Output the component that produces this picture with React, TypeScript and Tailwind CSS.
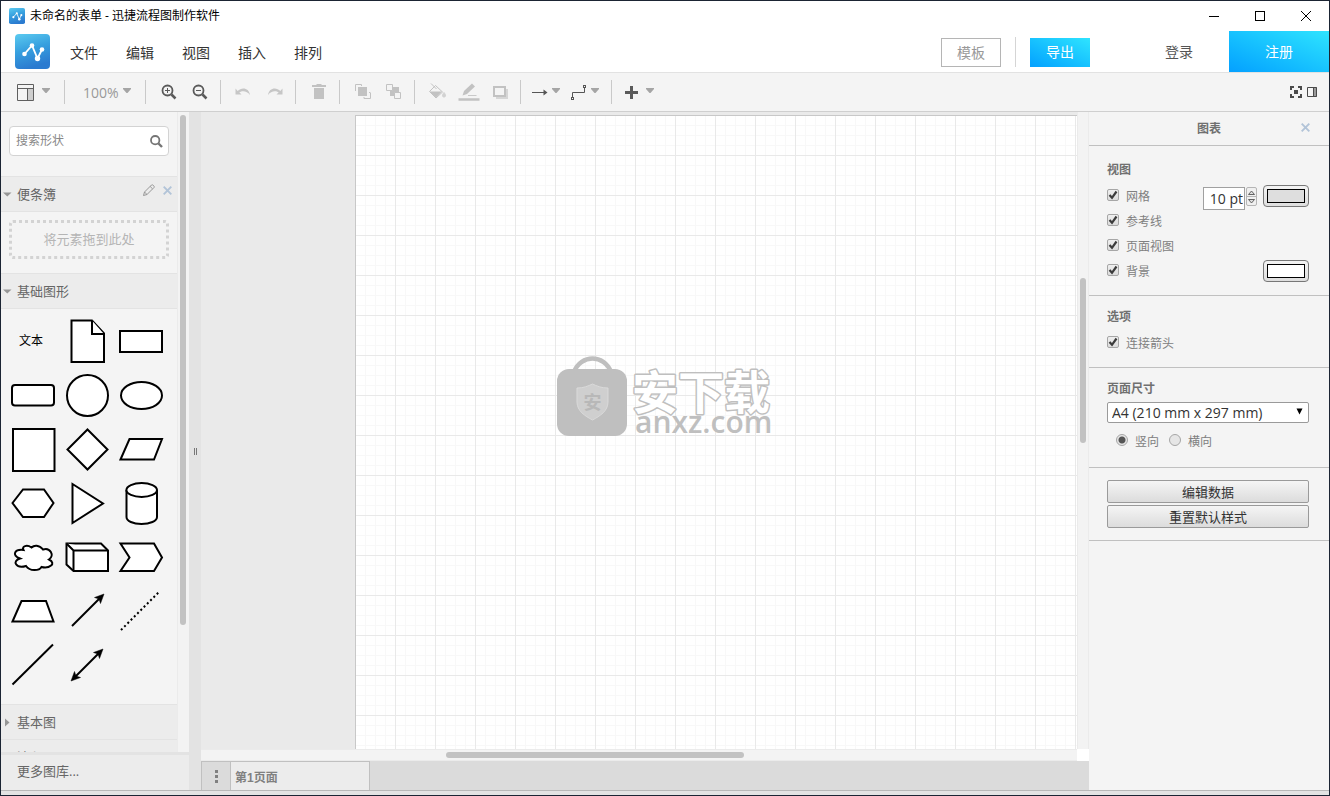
import React from 'react';

const menus = ['文件', '编辑', '视图', '插入', '排列'];

const shapes: { name: string; body: React.ReactNode }[] = [
  {
    name: '文档',
    body: (
      <>
        <path d="M11.5 6.5H32L44 19.5V48H11.5Z" />
        <path d="M32 6.5V20H44" />
      </>
    ),
  },
  { name: '矩形', body: <rect x="6" y="17" width="42" height="21" /> },
  { name: '圆角矩形', body: <rect x="6" y="17" width="42" height="20.5" rx="3" /> },
  { name: '圆', body: <circle cx="27.5" cy="27.5" r="20.5" /> },
  { name: '椭圆', body: <ellipse cx="27.5" cy="27.5" rx="20.5" ry="13.5" /> },
  { name: '正方形', body: <rect x="7" y="7" width="41.5" height="42" /> },
  { name: '菱形', body: <path d="M27.5 7.5L47.5 27.5L27.5 47.5L7.5 27.5Z" /> },
  { name: '平行四边形', body: <path d="M6.5 37.5L15.5 17H48L40 37.5Z" /> },
  { name: '六边形', body: <path d="M6.5 27L17 13.5H38L47.5 27L38 41H17Z" /> },
  { name: '三角形', body: <path d="M12.5 8L43 27.5L12.5 47Z" /> },
  {
    name: '圆柱',
    body: (
      <>
        <path d="M12.5 14V41C12.5 45 19 48 27.5 48S43 45 43 41V14" />
        <ellipse cx="27.7" cy="14" rx="15.3" ry="7" />
      </>
    ),
  },
  {
    name: '云',
    body: (
      <path d="M17.5 20C9 19 5 25 14 28.5C5.5 31 10 39 20 36C24 41.500 33 41 35.500 37C43 39 51 33.500 43 29.500C49 25.500 44 17 37 19.500C33 14.500 28 15 25.500 17.500C21 14.500 15.500 16 17.500 20Z" />
    ),
  },
  {
    name: '立方体',
    body: (
      <>
        <path d="M6.5 13.5H41L48 20.5V41H13.5L6.5 34.5Z" />
        <path d="M6.5 13.5L13.5 20.5H48M13.5 20.5V41" />
      </>
    ),
  },
  { name: '步骤', body: <path d="M6.5 13.5H40L48 27.5L40 41H6.5L15.5 27.5Z" /> },
  { name: '梯形', body: <path d="M6.5 37.5L15.5 17H40L47.5 37.5Z" /> },
  {
    name: '箭头',
    body: (
      <>
        <path d="M12 42L40 14" />
        <path d="M44 10L40.5 19.5L39 15L34.5 13.5Z" fill="#000" strokeWidth="0.5" />
      </>
    ),
  },
  { name: '虚线', body: <path d="M7 46L46 7" strokeDasharray="2 2.6" /> },
  { name: '直线', body: <path d="M6.5 46.5L47 6.5" /> },
  {
    name: '双向箭头',
    body: (
      <>
        <path d="M15 39L39 15" />
        <path d="M43 11L39.5 20.5L38 16L33.5 14.5Z" fill="#000" strokeWidth="0.5" />
        <path d="M11 43L14.5 33.5L16 38L20.5 39.5Z" fill="#000" strokeWidth="0.5" />
      </>
    ),
  },
];

const Logo: React.FC<{ className: string }> = ({ className }) => (
  <svg className={className} viewBox="0 0 35 35" aria-hidden="true">
    <defs>
      <linearGradient id="logo" x1="0" y1="0" x2="0.3" y2="1">
        <stop offset="0" stopColor="#5ccbf0" />
        <stop offset="0.5" stopColor="#37a0df" />
        <stop offset="1" stopColor="#2b7bd0" />
      </linearGradient>
    </defs>
    <rect width="35" height="35" rx="4" fill="url(#logo)" />
    <path d="M9.5 20L17 11.5L22.5 24.5L27 15.5" fill="none" stroke="#fff" strokeWidth="1.8" />
    <circle cx="9.5" cy="20" r="2.3" fill="#fff" />
    <circle cx="17" cy="11.5" r="2.3" fill="#fff" />
    <circle cx="22.5" cy="24.5" r="2.7" fill="#fff" />
    <circle cx="27" cy="15.5" r="2.3" fill="#fff" />
  </svg>
);

const Caret: React.FC = () => (
  <svg className="mb-1 h-[5px] w-2 shrink-0" viewBox="0 0 8 5" aria-hidden="true">
    <path d="M0 0H8V1L4.5 5H3.5L0 1Z" fill="#a5a5a5" />
  </svg>
);

const Group: React.FC<{ children: React.ReactNode }> = ({ children }) => (
  <div className="flex h-6 items-center border-r border-[#c9c9c9] pr-1 pl-2">{children}</div>
);

const Tool: React.FC<{ label: string; children: React.ReactNode }> = ({ label, children }) => (
  <button aria-label={label} className="flex h-6 w-[31px] items-center justify-center">
    <svg className="h-[22px] w-[22px]" viewBox="0 0 22 22" fill="none" aria-hidden="true">
      {children}
    </svg>
  </button>
);

const Toolbar: React.FC = () => (
  <div className="flex h-[39px] shrink-0 items-center border-b border-[#cfcfcf] bg-[#f4f4f4]">
    <div className="flex h-6 items-center border-r border-[#c9c9c9] pr-[14px] pl-4">
      <button aria-label="布局" className="flex items-center gap-2">
        <svg className="h-[17px] w-[17px]" viewBox="0 0 17 17" fill="none" aria-hidden="true">
          <rect x="11" y="5" width="5" height="11" fill="#cfcfcf" />
          <path d="M0.5 0.5H16.5V16.5H0.5ZM0.5 4.5H16.5M10.5 4.5V16.5" stroke="#5f5f5f" />
        </svg>
        <Caret />
      </button>
    </div>
    <div className="flex h-6 items-center border-r border-[#c9c9c9] pr-[14px] pl-[18px]">
      <button className="flex items-center gap-1 text-sm text-[#999]">
        <span className="pt-[2px]">100%</span>
        <Caret />
      </button>
    </div>
    <Group>
      <Tool label="放大">
        <circle cx="9.5" cy="9.5" r="5" stroke="#5a5a5a" strokeWidth="1.8" />
        <path d="M13.5 13.5L17.5 17.5" stroke="#5a5a5a" strokeWidth="2.5" />
        <path d="M7 9.5H12M9.5 7V12" stroke="#5a5a5a" />
      </Tool>
      <Tool label="缩小">
        <circle cx="9.5" cy="9.5" r="5" stroke="#5a5a5a" strokeWidth="1.8" />
        <path d="M13.5 13.5L17.5 17.5" stroke="#5a5a5a" strokeWidth="2.5" />
        <path d="M7 9.5H12" stroke="#5a5a5a" />
      </Tool>
    </Group>
    <Group>
      <Tool label="撤销">
        <path d="M2.5 7.500V13.500H8.500L6.300 11.300C9 9.500 14 9.500 17 14C16 6.500 8.500 5.800 4.700 10Z" fill="#c6c6c6" />
      </Tool>
      <Tool label="重做">
        <path d="M18.500 7.500V13.500H12.500L14.700 11.300C12 9.500 7 9.500 4 14C5 6.500 12.500 5.800 16.300 10Z" fill="#c6c6c6" />
      </Tool>
    </Group>
    <Group>
      <Tool label="删除">
        <path d="M4 4H8.5V3H13.5V4H18V6H4ZM6 7H16V18H6Z" fill="#c2c2c2" />
      </Tool>
    </Group>
    <Group>
      <Tool label="移至最前">
        <path d="M3.5 10V3.5H9.5V5M18.5 12V17.5H12V16M17 11.5H18.5" stroke="#c2c2c2" />
        <rect x="6" y="6" width="9" height="9" fill="#c2c2c2" />
      </Tool>
      <Tool label="移至最后">
        <rect x="7" y="6" width="9" height="9" fill="#c2c2c2" />
        <path d="M3.5 3.5H9.5V9.5H3.5ZM11.5 11.5H17.500V17.500H11.500Z" fill="#f4f4f4" stroke="#c2c2c2" />
      </Tool>
    </Group>
    <Group>
      <Tool label="填充颜色">
        <path d="M2.5 10.5H15L9 16.5Z" fill="#c2c2c2" />
        <path d="M2.5 10.5L8.5 4.5L15.5 11L9 17ZM4 2.5L9.500 8" stroke="#c2c2c2" />
        <path d="M17 11.5C19 14 19 16 17 16S15 14 17 11.5Z" fill="#d2d2d2" stroke="#d2d2d2" />
      </Tool>
      <Tool label="线条颜色">
        <path d="M4.5 14.5L6 10L14 2.5L17 5.5L9 13Z" fill="#c2c2c2" />
        <path d="M0.5 18.5H21.5" stroke="#c2c2c2" strokeWidth="2.5" />
        <path d="M10 14.5H18.5" stroke="#c9c9c9" />
      </Tool>
      <Tool label="阴影">
        <rect x="7" y="8" width="12" height="10" fill="#d6d6d6" />
        <rect x="5" y="6" width="11" height="9" fill="#f4f4f4" stroke="#c2c2c2" strokeWidth="2" />
      </Tool>
    </Group>
    <Group>
      <button aria-label="连接" className="flex w-[39px] items-center gap-1 pl-[3px]">
        <svg className="h-4 w-4" viewBox="0 0 16 16" aria-hidden="true">
          <path d="M0 8.5H13" stroke="#555" fill="none" />
          <path d="M11.5 5.5L15.5 8.5L11.5 11.5Z" fill="#555" />
        </svg>
        <Caret />
      </button>
      <button aria-label="航点" className="flex w-[39px] items-center gap-1 pl-[3px]">
        <svg className="h-4 w-4" viewBox="0 0 16 16" fill="none" stroke="#555" aria-hidden="true">
          <path d="M1.5 13V8.5H13.5V4" />
          <rect x="0.5" y="13.5" width="2" height="2" />
          <rect x="12.5" y="1.5" width="2" height="2" />
        </svg>
        <Caret />
      </button>
    </Group>
    <button aria-label="插入" className="flex items-center gap-2 pl-[13px]">
      <svg className="h-[13px] w-[13px]" viewBox="0 0 13 13" aria-hidden="true">
        <path d="M5 0H8V5H13V8H8V13H5V8H0V5H5Z" fill="#5a5a5a" />
      </svg>
      <Caret />
    </button>
    <div className="ml-auto flex items-center gap-[5px] pr-3 pb-px">
      <button aria-label="全屏">
        <svg className="h-3 w-3" viewBox="0 0 12 12" fill="none" aria-hidden="true">
          <path d="M1 4V1H4M8 1H11V4M11 8V11H8M4 11H1V8" stroke="#4a4a4a" strokeWidth="2" />
          <rect x="4" y="4" width="4" height="4" fill="#4a4a4a" />
        </svg>
      </button>
      <button aria-label="格式面板">
        <svg className="h-[10px] w-[10px]" viewBox="0 0 10 10" fill="none" aria-hidden="true">
          <rect x="6" y="0" width="4" height="10" fill="#999" />
          <path d="M0.5 0.5H9.5V9.5H0.5ZM6.5 0.5V9.5" stroke="#4a4a4a" />
        </svg>
      </button>
    </div>
  </div>
);

const SectionHeader: React.FC<{ title: string; open?: boolean; children?: React.ReactNode }> = ({ title, open, children }) => (
  <div className="-mb-px flex h-9 shrink-0 items-center border-y border-[#e3e3e3] bg-[#ececec]">
    <button aria-expanded={!!open} className="flex items-center gap-[5px] pl-[2px] text-[13px] leading-5 text-[#666]">
      <svg className="h-[9px] w-[9px]" viewBox="0 0 9 9" aria-hidden="true">
        <path d={open ? 'M0 2.5H8.5L4.3 6.5Z' : 'M2 0.5L6.5 4.5L2 8.5Z'} fill="#969696" />
      </svg>
      {title}
    </button>
    {children}
  </div>
);

const Sidebar: React.FC = () => (
  <aside className="flex w-[188px] shrink-0 flex-col bg-[#f4f4f4]">
    <div className="flex min-h-0 flex-1">
      <div className="flex w-44 flex-col overflow-hidden">
        <div className="mx-2 mt-[14px] mb-5 flex h-[30px] shrink-0 items-center rounded-sm border border-[#d3d3d3] bg-white pr-[5px] pl-[6px]">
          <input
            aria-label="搜索形状"
            placeholder="搜索形状"
            className="min-w-0 flex-1 text-xs text-[#555] outline-none placeholder:text-[#888]"
          />
          <button aria-label="搜索">
            <svg className="h-[13px] w-[13px]" viewBox="0 0 13 13" fill="none" stroke="#757575" aria-hidden="true">
              <circle cx="5.2" cy="5.2" r="4.2" strokeWidth="1.8" />
              <path d="M8.5 8.5L12 12" strokeWidth="2.4" />
            </svg>
          </button>
        </div>
        <SectionHeader title="便条簿" open>
          <div className="mb-2 ml-auto flex items-center gap-2 pr-[5px]">
            <button aria-label="编辑便条簿">
              <svg className="h-3 w-3" viewBox="0 0 12 12" fill="none" stroke="#8d8d8d" aria-hidden="true">
                <path d="M0.5 11.5L1.5 8L8.5 1C9.5 0 12 2.5 11 3.5L4 10.5ZM1.5 8L4 10.5M7.2 2.5L9.5 4.8" strokeWidth="0.9" />
              </svg>
            </button>
            <button aria-label="关闭便条簿">
              <svg className="h-[9px] w-[9px]" viewBox="0 0 9 9" aria-hidden="true">
                <path d="M0.7 0.7L8.3 8.3M8.3 0.7L0.7 8.3" stroke="#b2c4d8" strokeWidth="1.9" />
              </svg>
            </button>
          </div>
        </SectionHeader>
        <div className="mx-2 mt-[9px] mb-[14px] flex h-[39px] shrink-0 items-center justify-center rounded border-[3px] border-dotted border-[#d3d3d3] text-[13px] text-[#b5b5b5]">
          将元素拖到此处
        </div>
        <SectionHeader title="基础图形" open />
        <div className="grid shrink-0 grid-cols-[repeat(3,54px)] pt-[6px] pb-3 pl-[5px]">
          <button className="h-[54px] pr-1 text-xs text-black">文本</button>
          {shapes.map((s) => (
            <button key={s.name} aria-label={s.name} className="h-[54px]">
              <svg className="h-[54px] w-[54px]" viewBox="0 0 54 54" fill="#fff" stroke="#000" strokeWidth="2" aria-hidden="true">
                {s.body}
              </svg>
            </button>
          ))}
        </div>
        <SectionHeader title="基本图" />
        <SectionHeader title="流程图" />
      </div>
      <div className="flex-1 border-l border-[#ebebeb] bg-[#f3f3f3] px-[2px] pt-[3px]">
        <div className="h-4/5 w-[6px] rounded-full bg-[#c2c2c2]" />
      </div>
    </div>
    <a href="#more" className="flex h-[38px] shrink-0 items-center border-t-[3px] border-[#e3e3e3] bg-[#ececec] pb-px pl-4 text-[13px] text-[#666]">
      更多图库...
    </a>
  </aside>
);

const Watermark: React.FC = () => (
  <svg className="pointer-events-none absolute top-[239px] left-[200px] h-[84px] w-[224px]" viewBox="0 0 224 84">
    <path d="M18 17C25 -1 48 -1 55 17" fill="none" stroke="#bfbfbf" strokeWidth="4.5" />
    <rect x="1" y="14" width="70" height="67" rx="12" fill="#bfbfbf" />
    <path d="M21 33C28 33 32 31 36.500 29C41 31 45 33 52 33V47C52 56 44 61 36.500 65C29 61 21 56 21 47Z" fill="#cfcfcf" stroke="#dadada" />
    <g fontFamily="'Noto Sans CJK SC', sans-serif" fontWeight="700">
      <text x="36.5" y="54" fontSize="18" textAnchor="middle" fill="#b8b8b8">安</text>
      <text x="76" y="54" fontSize="46" fill="#fff" stroke="#bfbfbf" strokeWidth="3" strokeLinejoin="round" paintOrder="stroke">
        安下载
      </text>
    </g>
    <text x="79" y="78" fontFamily="'Open Sans', sans-serif" fontSize="30" fontWeight="600" fill="#bfbfbf">anxz.com</text>
  </svg>
);

const Canvas: React.FC = () => (
  <main className="flex min-w-0 flex-1 flex-col">
    <div className="flex min-h-0 flex-1">
      <div className="flex min-w-0 flex-1 overflow-hidden bg-[#eaeaea] pt-[3px] pl-[154px]">
        <div className="relative flex-1 border-t border-l border-[#c8c8c8] bg-white bg-[linear-gradient(to_right,#e9e9e9_1px,transparent_1px),linear-gradient(to_bottom,#e9e9e9_1px,transparent_1px),linear-gradient(to_right,#f8f8f8_1px,transparent_1px),linear-gradient(to_bottom,#f8f8f8_1px,transparent_1px)] bg-[size:40px_40px,40px_40px,10px_10px,10px_10px] bg-[position:-1px_-1px]">
          <Watermark />
        </div>
      </div>
      <div className="flex w-3 flex-col border-x border-[#ebebeb] bg-[#f3f3f3] px-[2px]">
        <div className="basis-[26%]" />
        <div className="h-[26%] w-[6px] rounded-full bg-[#c2c2c2]" />
      </div>
    </div>
    <div className="flex h-3 shrink-0">
      <div className="flex flex-1 items-center border-y border-[#ebebeb] bg-[#f3f3f3]">
        <div className="basis-[28%]" />
        <div className="h-[6px] w-[34%] rounded-full bg-[#c2c2c2]" />
      </div>
      <div className="w-3 bg-white" />
    </div>
    <div className="flex h-[29px] shrink-0 bg-[#dbdbdb]">
      <button aria-label="页面列表" className="flex w-[29px] items-center justify-center border-t border-l border-[#c0c0c0]">
        <svg className="h-[13px] w-[3px]" viewBox="0 0 3 13" aria-hidden="true">
          <path d="M0 0H3V3H0ZM0 5H3V8H0ZM0 10H3V13H0Z" fill="#808080" />
        </svg>
      </button>
      <button className="w-[140px] border-x border-t border-[#c0c0c0] bg-[#ececec] pt-1 pl-1 text-left font-[Liberation_Sans,Noto_Sans_CJK_SC,sans-serif] text-xs font-bold text-[#808080]">
        第1页面
      </button>
    </div>
  </main>
);

const Check: React.FC<{ label: string }> = ({ label }) => (
  <label className="flex h-[25px] items-center gap-[7px] text-xs text-[#808080]">
    <span className="relative mb-[3px] flex h-3 w-3">
      <input
        type="checkbox"
        defaultChecked
        className="peer h-3 w-3 appearance-none rounded-xs border border-[#a6a6a6] bg-linear-to-b from-[#efefef] to-[#dcdcdc]"
      />
      <svg className="pointer-events-none absolute inset-0 hidden h-3 w-3 peer-checked:block" viewBox="0 0 12 12" aria-hidden="true">
        <path d="M2.5 6L5 8.8L9.5 2.5" fill="none" stroke="#3c3c3c" strokeWidth="2.2" />
      </svg>
    </span>
    {label}
  </label>
);

const Radio: React.FC<{ label: string; checked?: boolean }> = ({ label, checked }) => (
  <label className="flex items-center gap-[7px] text-xs text-[#808080]">
    <input
      type="radio"
      name="orientation"
      defaultChecked={checked}
      className="mb-1 h-3 w-3 appearance-none rounded-full border border-[#a6a6a6] bg-[#e6e6e6] checked:bg-[radial-gradient(circle,#555_0_3px,#e6e6e6_4px)]"
    />
    {label}
  </label>
);

const Swatch: React.FC<{ label: string; color: string }> = ({ label, color }) => (
  <button aria-label={label} className="mb-[2px] flex h-[22px] w-[46px] rounded-sm border border-[#777] bg-linear-to-b from-[#f3f3f3] to-[#dedede] p-[3px]">
    <span className={`h-full w-full border border-black ${color}`} />
  </button>
);

const panelButton =
  'h-[23px] w-full rounded-xs border border-[#9a9a9a] bg-linear-to-b from-[#f5f5f5] to-[#dcdcdc] text-[13px] leading-5 text-[#333]';

const FormatPanel: React.FC = () => (
  <aside className="w-60 shrink-0 bg-[#f4f4f4] text-xs text-[#707070]">
    <div className="flex h-[34px] items-center border-b border-[#c0c0c0] pr-[19px] pl-7">
      <h2 className="flex-1 text-center font-bold">图表</h2>
      <button aria-label="关闭面板" className="mb-[2px]">
        <svg className="h-[9px] w-[9px]" viewBox="0 0 9 9" aria-hidden="true">
          <path d="M0.7 0.7L8.3 8.3M8.3 0.7L0.7 8.3" stroke="#b2c4d8" strokeWidth="1.9" />
        </svg>
      </button>
    </div>

    <section className="border-b border-[#c0c0c0] pt-[14px] pr-5 pb-[11px] pl-[18px]">
      <h3 className="mb-1 leading-5 font-bold">视图</h3>
      <div className="flex h-[25px] items-center">
        <Check label="网格" />
        <input
          aria-label="网格大小"
          defaultValue="10 pt"
          className="mt-1 ml-auto h-[23px] w-[42px] border border-[#a0a0a0] bg-white pr-px text-right text-sm text-[#333]"
        />
        <div className="mr-[6px] ml-px flex h-[19px] w-[11px] flex-col rounded-xs border border-[#b5b5b5] bg-[#f0f0f0]">
          <button aria-label="增大" className="flex flex-1 items-center justify-center border-b border-[#b5b5b5]">
            <svg className="h-[5px] w-[7px]" viewBox="0 0 7 5" fill="#ddd" stroke="#555" strokeWidth="0.9" aria-hidden="true">
              <path d="M0.5 4.5L3.5 1L6.5 4.5Z" />
            </svg>
          </button>
          <button aria-label="减小" className="flex flex-1 items-center justify-center">
            <svg className="h-[5px] w-[7px]" viewBox="0 0 7 5" fill="#ddd" stroke="#555" strokeWidth="0.9" aria-hidden="true">
              <path d="M0.5 0.5L3.5 4L6.5 0.5Z" />
            </svg>
          </button>
        </div>
        <Swatch label="网格颜色" color="bg-[#dedede]" />
      </div>
      <Check label="参考线" />
      <Check label="页面视图" />
      <div className="flex items-center justify-between">
        <Check label="背景" />
        <Swatch label="背景颜色" color="bg-white" />
      </div>
    </section>

    <section className="border-b border-[#c0c0c0] pt-[11px] pr-5 pb-[11px] pl-[18px]">
      <h3 className="mb-1 leading-5 font-bold">选项</h3>
      <Check label="连接箭头" />
    </section>

    <section className="border-b border-[#c0c0c0] pt-[11px] pr-5 pb-[15px] pl-[18px]">
      <h3 id="page-size" className="mb-[3px] leading-5 font-bold">页面尺寸</h3>
      <div className="relative">
        <select
          aria-labelledby="page-size"
          className="block h-[21px] w-full appearance-none rounded-xs border border-[#9a9a9a] bg-white px-1 text-sm leading-4 text-[#333]"
        >
          <option>A4 (210 mm x 297 mm)</option>
        </select>
        <svg className="pointer-events-none absolute top-[6px] right-[6px] h-[7px] w-[7px]" viewBox="0 0 7 7" aria-hidden="true">
          <path d="M0.5 0.5H6.5L3.5 6.5Z" fill="#000" />
        </svg>
      </div>
      <div className="mt-[9px] flex h-5 items-center gap-[10px] pl-[9px]">
        <Radio label="竖向" checked />
        <Radio label="横向" />
      </div>
    </section>

    <section className="flex flex-col gap-[2px] border-b border-[#c0c0c0] pt-3 pr-5 pb-3 pl-[18px]">
      <button className={panelButton}>编辑数据</button>
      <button className={panelButton}>重置默认样式</button>
    </section>
  </aside>
);

const App: React.FC = () => {
  return (
    <div className="flex h-screen flex-col overflow-hidden border border-[#1b2433] bg-white font-[Open_Sans,Noto_Sans_CJK_SC,sans-serif]">
      <header className="flex h-[30px] shrink-0 items-center pl-2">
        <Logo className="h-4 w-4" />
        <h1 className="pl-[5px] text-xs text-black">未命名的表单 - 迅捷流程图制作软件</h1>
        <div className="ml-auto flex">
          <button aria-label="最小化" className="flex h-7 w-[46px] items-center justify-center">
            <svg className="h-[10px] w-[10px]" viewBox="0 0 10 10" aria-hidden="true">
              <path d="M0 5.5H10" stroke="#000" />
            </svg>
          </button>
          <button aria-label="最大化" className="flex h-7 w-[46px] items-center justify-center">
            <svg className="h-[10px] w-[10px]" viewBox="0 0 10 10" aria-hidden="true">
              <rect x="0.5" y="0.5" width="9" height="9" fill="none" stroke="#000" />
            </svg>
          </button>
          <button aria-label="关闭" className="flex h-7 w-[46px] items-center justify-center">
            <svg className="h-[10px] w-[10px]" viewBox="0 0 10 10" aria-hidden="true">
              <path d="M0 0L10 10M10 0L0 10" stroke="#000" />
            </svg>
          </button>
        </div>
      </header>

      <nav className="flex h-[42px] shrink-0 items-center border-b border-[#e2e2e2] pl-[14px] text-sm text-[#333]">
        <Logo className="h-[35px] w-[35px]" />
        <div className="flex gap-7 pt-[2px] pl-5">
          {menus.map((m) => (
            <button key={m}>{m}</button>
          ))}
        </div>
        <div className="ml-auto flex items-center self-stretch">
          <button className="mt-px h-[29px] w-[60px] border border-[#b5b5b5] pt-[2px] text-[#999]">模板</button>
          <span className="mx-[14px] h-[30px] w-px bg-[#d5d5d5]" />
          <button className="mt-px h-[29px] w-[60px] bg-linear-to-tr from-[#06a0ff] to-[#2fe4ff] text-white">导出</button>
          <a href="#login" className="px-[75px] pr-9 text-[#555]">登录</a>
          <a href="#register" className="flex w-[100px] items-center justify-center self-stretch bg-linear-to-tr from-[#06a0ff] to-[#2fe4ff] text-white">
            注册
          </a>
        </div>
      </nav>

      <Toolbar />

      <div className="flex min-h-0 flex-1">
        <Sidebar />
        <div className="flex w-3 shrink-0 items-center justify-center bg-[#e3e3e3]">
          <div className="h-[7px] w-[3px] border-x border-[#777]" />
        </div>
        <Canvas />
        <FormatPanel />
      </div>

      <footer className="h-[5px] shrink-0 border-t border-[#b8b8b8] bg-[#e3e3e3]" />
    </div>
  );
};

export default App;
